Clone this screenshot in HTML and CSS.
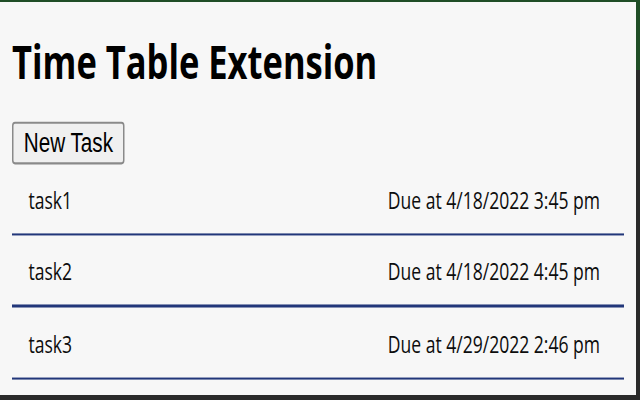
FILE: index.html
```html
<!DOCTYPE html>
<html>
<head>
<meta charset="utf-8">
<title>Time Table Extension</title>
<link rel="stylesheet" href="styles.css">
</head>
<body>
<div class="screen">
  <div class="window">
    <main class="page">
      <h1 class="title">Time Table Extension</h1>
      <button class="new-task">New Task</button>
      <ul class="tasks">
        <li class="task"><span class="task-name">task1</span><span class="task-due">Due at 4/18/2022 3:45 pm</span></li>
        <li class="task"><span class="task-name">task2</span><span class="task-due">Due at 4/18/2022 4:45 pm</span></li>
        <li class="task"><span class="task-name">task3</span><span class="task-due">Due at 4/29/2022 2:46 pm</span></li>
      </ul>
    </main>
  </div>
</div>
</body>
</html>
```
FILE: styles.css
```css
html, body {
  margin: 0;
  padding: 0;
}
body {
  width: 640px;
  height: 400px;
  overflow: hidden;
}
.screen {
  height: 400px;
  padding-top: 2px;
  box-sizing: border-box;
  background: linear-gradient(to bottom, #1f4d26 0, #1f4d26 70px, #2a2a2a 70px, #2a2a2a 100%);
}
.window {
  width: 636px;
  height: 393px;
  background: #f7f7f7;
  overflow: hidden;
}
.page {
  display: flow-root;
  width: 424px;
  padding: 13.4px 8px 0;
  box-sizing: border-box;
  transform: scale(1.5, 2.03);
  transform-origin: 0 0;
  font-family: "Open Sans", "Noto Sans", sans-serif;
  color: #111;
}
.title {
  font-family: "Open Sans", "Noto Sans", sans-serif;
  font-weight: 700;
  font-size: 23px;
  line-height: 32px;
  margin: 0 0 13.2px;
  color: #000;
  letter-spacing: 0;
}
.new-task {
  display: block;
  font-family: "Liberation Sans", Arial, sans-serif;
  font-size: 13.8px;
  line-height: 15px;
  padding: 1px 6.8px;
  margin: 0;
  height: 21.2px;
  background: #f0f0f0;
  border: 1px solid #8a8a8a;
  border-radius: 2px;
  color: #000;
}
.tasks {
  list-style: none;
  margin: 0;
  padding: 0;
}
.task {
  display: flex;
  justify-content: space-between;
  align-items: center;
  height: 35.5px;
  box-sizing: border-box;
  padding: 0 16px 1.5px 11px;
  background: linear-gradient(#22377a, #22377a) left bottom / 100% 1.5px no-repeat;
  font-size: 11.7px;
  color: #0d0d0d;
}
```
